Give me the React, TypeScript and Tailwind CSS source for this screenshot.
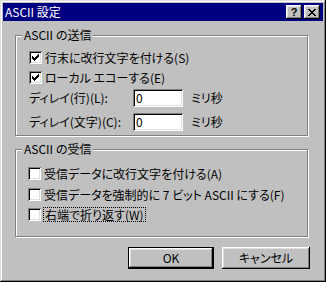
import React from "react";

const raised =
  "shadow-[inset_-1px_-1px_#000,inset_1px_1px_#fff,inset_-2px_-2px_#808080,inset_2px_2px_#dfdfdf]";
const sunken =
  "shadow-[inset_1px_1px_#808080,inset_-1px_-1px_#fff,inset_2px_2px_#000,inset_-2px_-2px_#dfdfdf]";
const etched =
  "border border-[#808080] shadow-[1px_1px_0_#fff,inset_1px_1px_0_#fff]";

function Check({ checked }: { checked?: boolean }) {
  return (
    <div className={`w-[13px] h-[13px] shrink-0 bg-white ${sunken}`}>
      {checked && (
        <svg width="13" height="13" viewBox="0 0 13 13" shapeRendering="crispEdges">
          <path
            fill="#000"
            d="M9 3h1v1h-1z M8 4h2v1h-2z M3 5h1v1h-1z M7 5h3v1h-3z M3 6h2v1h-2z M6 6h3v1h-3z M3 7h5v1h-5z M4 8h3v1h-3z M5 9h1v1h-1z"
          />
        </svg>
      )}
    </div>
  );
}

function CheckRow({
  checked,
  label,
  focus,
  className = "",
}: {
  checked?: boolean;
  label: string;
  focus?: boolean;
  className?: string;
}) {
  return (
    <div className={`flex items-center h-[13px] ${focus ? "gap-[2px]" : "gap-[3px]"} ${className}`}>
      <Check checked={checked} />
      {focus ? (
        <span className="border border-dotted border-black px-[1px] leading-[13px] whitespace-nowrap">
          {label}
        </span>
      ) : (
        <span className="leading-[13px] whitespace-nowrap">{label}</span>
      )}
    </div>
  );
}

function DelayRow({ label, className = "" }: { label: string; className?: string }) {
  return (
    <div className={`flex items-center h-[18px] ${className}`}>
      <span className="w-[104px] whitespace-nowrap leading-[14px]">{label}</span>
      <div className={`w-[50px] h-[18px] bg-white flex items-center pl-[3px] ${sunken}`}>
        <span className="leading-[14px]">0</span>
      </div>
      <span className="ml-[8px] leading-[14px]">ミリ秒</span>
    </div>
  );
}

function CaptionBtn({ children }: { children: React.ReactNode }) {
  return (
    <div
      className={`w-[16px] h-[14px] bg-[#c0c0c0] flex items-center justify-center ${raised}`}
    >
      {children}
    </div>
  );
}

export default function App() {
  return (
    <div
      className={`w-[326px] h-[282px] bg-[#c0c0c0] p-[3px] flex flex-col text-black text-[12px] leading-none font-['Noto_Sans_CJK_JP',sans-serif] [font-feature-settings:'palt'] shadow-[inset_-1px_-1px_#000,inset_1px_1px_#dfdfdf,inset_-2px_-2px_#808080,inset_2px_2px_#fff]`}
    >
      {/* Title bar */}
      <div className="h-[18px] shrink-0 bg-[#000080] flex items-center pl-[2px] pr-[3px]">
        <span className="text-white leading-[14px] whitespace-nowrap">ASCII 設定</span>
        <div className="ml-auto flex gap-[2px]">
          <CaptionBtn>
            <span className="font-['Liberation_Sans',sans-serif] font-bold text-[11px] leading-none mt-[1px]">
              ?
            </span>
          </CaptionBtn>
          <CaptionBtn>
            <svg width="8" height="7" viewBox="0 0 8 7" shapeRendering="crispEdges">
              <path
                fill="#000"
                d="M0 0h2v1H0z M6 0h2v1H6z M1 1h2v1H1z M5 1h2v1H5z M2 2h4v1H2z M3 3h2v1H3z M2 4h4v1H2z M1 5h2v1H1z M5 5h2v1H5z M0 6h2v1H0z M6 6h2v1H6z"
              />
            </svg>
          </CaptionBtn>
        </div>
      </div>

      {/* Content */}
      <div className="flex flex-col pl-[12px] pr-[15px] pt-[14px]">
        {/* Group 1 */}
        <div className={`relative h-[101px] ${etched} flex flex-col pl-[13px] pt-[15px]`}>
          <span className="absolute left-[6px] top-[-8px] px-[2px] bg-[#c0c0c0] leading-[14px] whitespace-nowrap">
            ASCII の送信
          </span>
          <CheckRow checked label="行末に改行文字を付ける(S)" />
          <CheckRow checked label="ローカル エコーする(E)" className="mt-[7px]" />
          <DelayRow label="ディレイ(行)(L):" className="mt-[5px]" />
          <DelayRow label="ディレイ(文字)(C):" className="mt-[6px]" />
        </div>

        {/* Group 2 */}
        <div className={`relative h-[88px] mt-[13px] ${etched} flex flex-col pl-[12px] pt-[17px]`}>
          <span className="absolute left-[6px] top-[-8px] px-[2px] bg-[#c0c0c0] leading-[14px] whitespace-nowrap">
            ASCII の受信
          </span>
          <CheckRow label="受信データに改行文字を付ける(A)" />
          <CheckRow label="受信データを強制的に 7 ビット ASCII にする(F)" className="mt-[8px]" />
          <CheckRow label="右端で折り返す(W)" focus className="mt-[7px]" />
        </div>

        {/* Buttons */}
        <div className="flex justify-end gap-[8px] mt-[10px] -mr-[2px]">
          <div className="w-[86px] h-[22px] border border-black">
            <div className={`w-full h-full bg-[#c0c0c0] flex items-center justify-center ${raised}`}>
              <span className="leading-[14px]">OK</span>
            </div>
          </div>
          <div
            className={`w-[88px] h-[22px] bg-[#c0c0c0] flex items-center justify-center ${raised}`}
          >
            <span className="leading-[14px]">キャンセル</span>
          </div>
        </div>
      </div>
    </div>
  );
}
